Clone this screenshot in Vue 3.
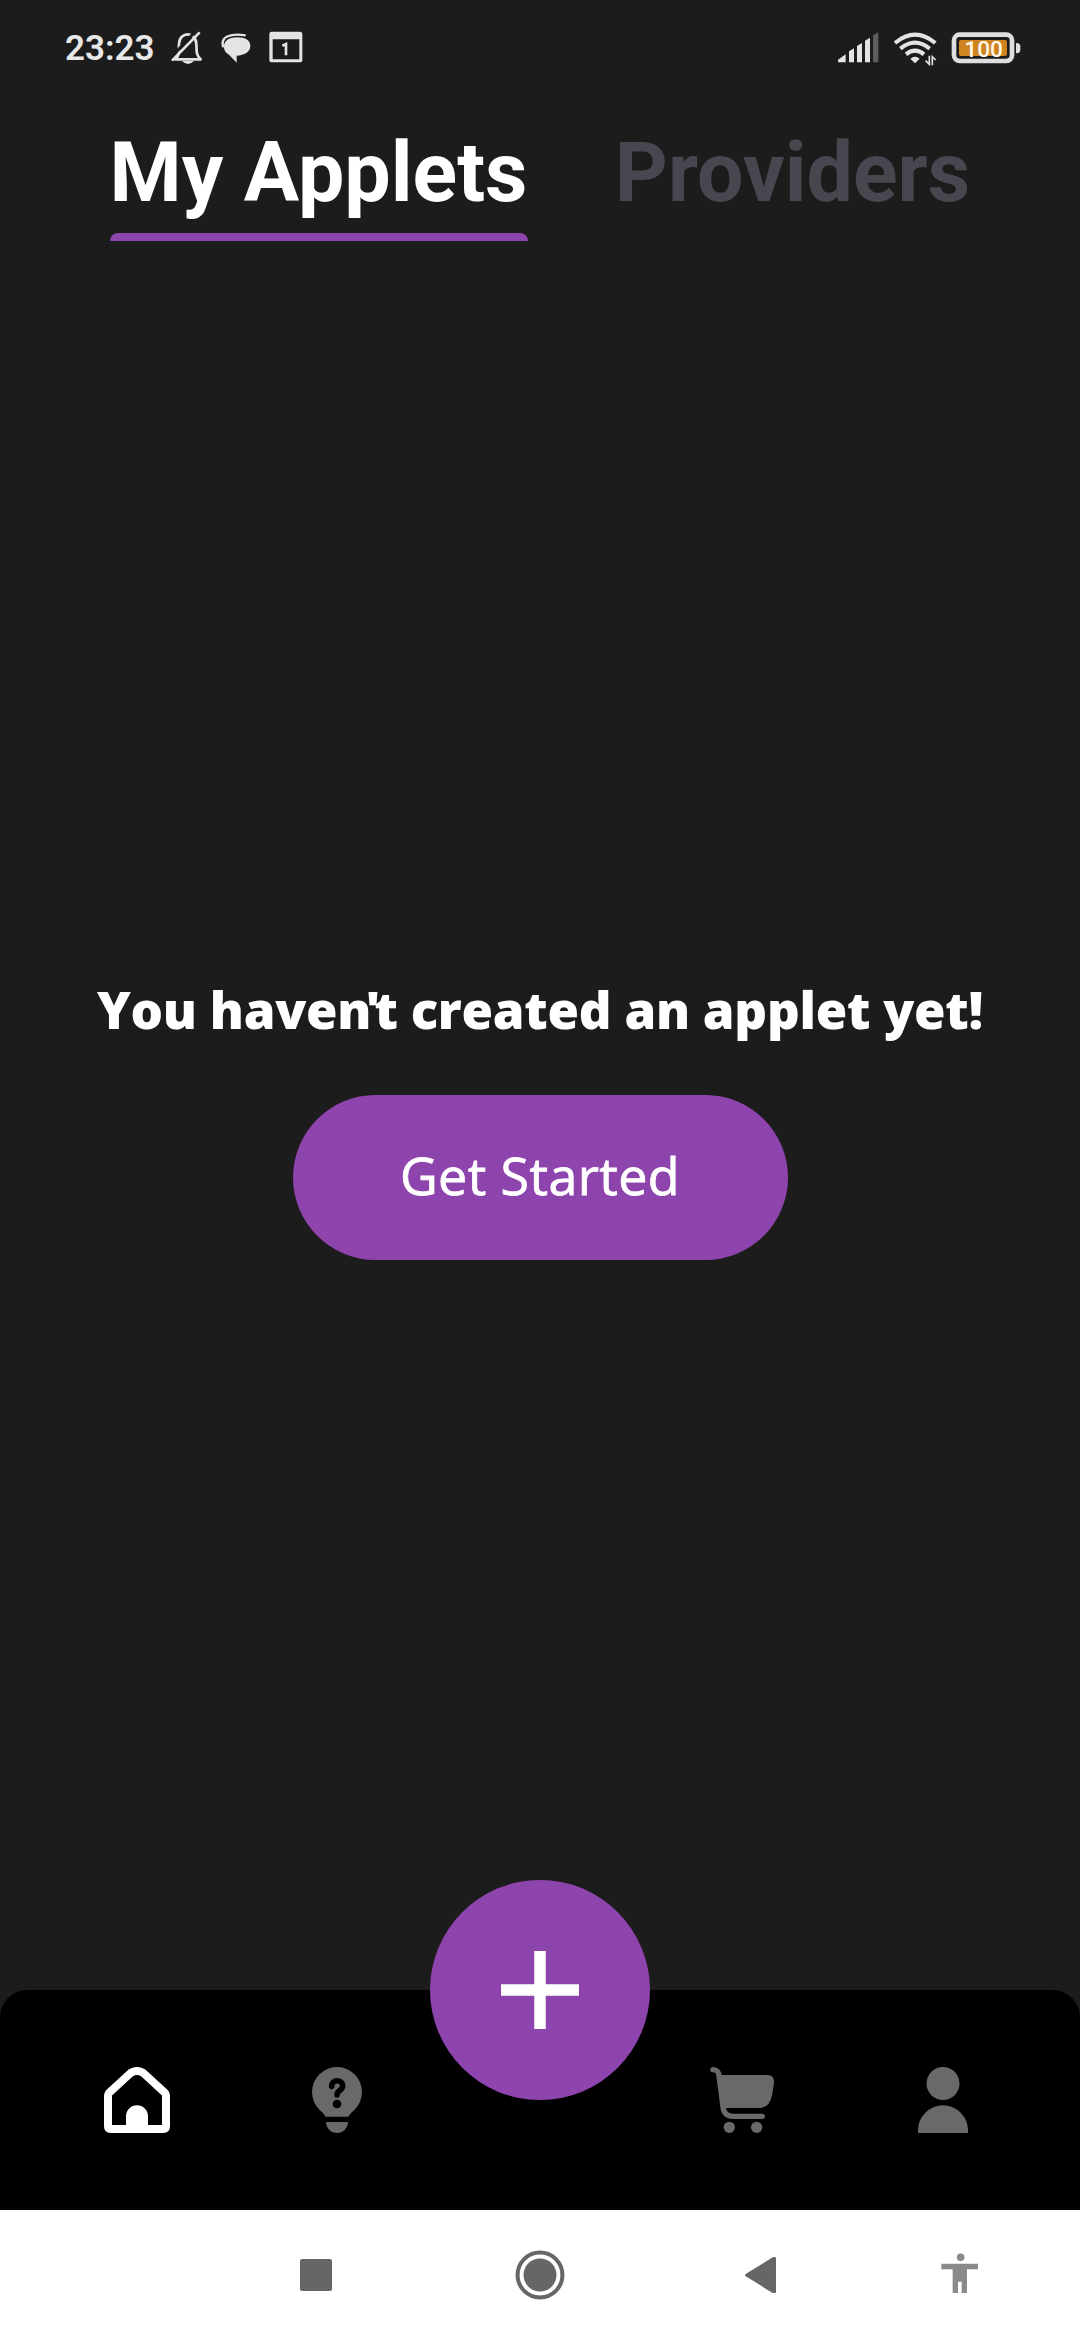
<script setup>
import { ref } from 'vue'

const tabs = ['My Applets', 'Providers']
const active = ref(0)
</script>

<template>
  <div class="screen">
    <header class="status">
      <span class="time">23:23</span>
      <svg class="bell" viewBox="390 60 102 108" width="34" height="36">
        <path d="M405 148 C422 134 415 122 417 101 C419 64 467 64 469 101 C471 122 466 132 482 148 Z" fill="none" stroke="#e4e4e4" stroke-width="8" stroke-linejoin="round" />
        <path d="M426 153 H462 Q444 171 426 153Z" fill="#e4e4e4" />
        <path d="M390 146 L470 60" stroke="#1c1c1c" stroke-width="9" />
        <path d="M396 152 L479 67" stroke="#e4e4e4" stroke-width="8" />
      </svg>
      <svg class="chat" viewBox="543 60 90 108" width="30" height="36">
        <path d="M550 112 C539 78 574 69 617 76" fill="none" stroke="#e4e4e4" stroke-width="7" />
        <path d="M592 82 C617 82 631 92 631 108 C631 126 613 136 590 137 V158 L567 134 C556 128 551 120 552 109 C552 92 568 82 592 82Z" fill="#e4e4e4" />
      </svg>
      <svg class="calendar" viewBox="687 60 102 108" width="34" height="36">
        <path fill-rule="evenodd" d="M695 65 H780 Q787 65 787 72 V149 Q787 157 780 157 H696 Q688 157 688 149 V72 Q688 65 695 65Z M698 88 V148 H778 V88Z" fill="#e4e4e4" />
        <path d="M727 107 L738 102 V136" fill="none" stroke="#e4e4e4" stroke-width="8" />
      </svg>
      <svg class="signal" viewBox="81 60 126 108" width="42" height="36">
        <path d="M84 157 V149 L107 133 V157Z M117 157 V124 L132 115 V157Z M141 157 V108 L156 99 V157Z M165 157 V92 L180 83 V157Z" fill="#e4e4e4" />
        <path d="M189 157 V76 L205 67 V157Z" fill="#5d5d5d" />
      </svg>
      <svg class="wifi" viewBox="249 60 132 108" width="44" height="36">
        <g fill="none" stroke="#e4e4e4" stroke-width="12">
          <path d="M255 99 Q315 49 376 99" />
          <path d="M271 116 Q315 80 359 116" />
          <path d="M288 133 Q315 111 342 133" />
        </g>
        <path d="M301 146 Q315 134 329 146 L315 160Z" fill="#e4e4e4" />
        <path d="M358 137 V163 L347 152 M367 166 V140 L377 150" fill="none" stroke="#e4e4e4" stroke-width="5" />
      </svg>
      <svg class="battery" viewBox="423 60 210 108" width="70" height="36">
        <rect x="432" y="74" width="174" height="79" rx="17" fill="none" stroke="#dedede" stroke-width="14" />
        <rect x="447" y="90" width="144" height="48" rx="6" fill="#cf8420" />
        <path d="M618 99 Q631 99 631 109 V120 Q631 130 618 130Z" fill="#dedede" />
        <text x="463" y="140" textLength="116" lengthAdjust="spacingAndGlyphs">100</text>
      </svg>
    </header>

    <nav class="tabs">
      <button
        v-for="(tab, i) in tabs"
        :key="tab"
        class="tab"
        :class="{ active: active === i }"
        @click="active = i"
      >{{ tab }}</button>
    </nav>

    <main class="empty">
      <h1>You have<span class="tight">n'</span>t created an applet yet!</h1>
      <button class="start">Get Started</button>
    </main>

    <footer class="bar">
      <svg class="home" viewBox="72 81 198 198" width="66" height="66">
        <path d="M84 166 Q84 162 88 158 L153 98 Q171 88 189 98 L254 158 Q258 162 258 166 V259 Q258 267 250 267 H92 Q84 267 84 259Z" fill="none" stroke="#fff" stroke-width="24" />
        <path d="M138 265 V229 a33 33 0 0 1 66 0 V265Z" fill="#fff" />
      </svg>
      <svg class="bulb" viewBox="696 81 150 198" width="50" height="66">
        <path d="M737 230 Q732 220 719 210 A75 75 0 1 1 823 210 Q810 220 805 230Z M738 246 H804 a33 33 0 0 1 -66 0Z" fill="#696969" />
        <path d="M755 139 C755 117 788 117 788 138 C788 152 771 151 771 164" fill="none" stroke="#000" stroke-width="17" stroke-linecap="round" />
        <circle cx="771" cy="192" r="13" />
      </svg>
      <button class="fab" aria-label="Add">
        <svg viewBox="0 0 78 78" width="78" height="78"><path d="M39 0V78M0 39H78" stroke="#fff" stroke-width="11.5" /></svg>
      </button>
      <svg class="cart" viewBox="60 81 193 198" width="64.3" height="66">
        <path d="M86 105 H232 Q254 105 252 129 L247 162 Q240 204 208 204 H94Z" fill="#696969" />
        <path d="M69 89 C81 89 87 97 87 108 L99 200 Q102 229 130 229 H217" fill="none" stroke="#696969" stroke-width="16" stroke-linecap="round" />
        <circle cx="118" cy="262" r="17" fill="#696969" />
        <circle cx="200" cy="262" r="17" fill="#696969" />
      </svg>
      <svg class="person" viewBox="684 81 150 198" width="50" height="66">
        <circle cx="759" cy="130.500" r="49.500" fill="#696969" />
        <path d="M684 279 V271 a75 75 0 0 1 150 0 V279Z" fill="#696969" />
      </svg>
    </footer>

    <div class="system">
      <span class="recents"></span>
      <svg class="circle" viewBox="0 0 50 50" width="50" height="50">
        <circle cx="25" cy="25" r="22.400" fill="none" stroke="#666" stroke-width="4" />
        <circle cx="25" cy="25" r="16.500" fill="#666" />
      </svg>
      <svg class="back" viewBox="135 172 93 109" width="31" height="36.300">
        <path d="M137 223 L218 173 Q228 169 228 177 V276 Q228 284 218 280 L137 230 Q133 227 137 223Z" fill="#666" />
      </svg>
      <svg class="access" viewBox="722 154 112 122" width="37.300" height="40.700">
        <circle cx="781" cy="167" r="11.500" fill="#8a8a8a" />
        <path d="M723 186 H834 V203 H800 V275 H784 V240 H773 V275 H757 V203 H723Z" fill="#8a8a8a" />
      </svg>
    </div>
  </div>
</template>

<style>
body {
  margin: 0;
  background: #1c1c1c;
}
</style>

<style scoped>
.screen {
  display: flex;
  flex-direction: column;
  width: 1080px;
  height: 2340px;
  overflow: hidden;
  background: #1c1c1c;
  font-family: Roboto, sans-serif;
}
svg {
  display: block;
  flex: none;
}
button {
  border: 0;
  padding: 0;
  background: none;
  font: inherit;
}
.status {
  display: flex;
  align-items: center;
  box-sizing: border-box;
  height: 96px;
  padding: 0 59px 0 65px;
}
.time {
  width: 105px;
  font-size: 35px;
  font-weight: 600;
  color: #e8e8e8;
  white-space: nowrap;
}
.chat {
  margin-left: 17px;
}
.calendar {
  margin-left: 18px;
}
.signal {
  margin-left: auto;
}
.wifi {
  margin-left: 14px;
}
.battery {
  margin-left: 14px;
}
.battery text {
  font: 500 68px Roboto, sans-serif;
  fill: #fff8e8;
}
.tabs {
  display: flex;
  justify-content: center;
  gap: 87px;
  height: 145px;
}
.tab {
  display: flex;
  justify-content: center;
  box-sizing: border-box;
  width: 356px;
  height: 145px;
  padding-top: 28px;
  font-size: 82.5px;
  font-weight: 700;
  line-height: 97px;
  color: #48464f;
  white-space: nowrap;
}
.tab.active {
  flex-direction: column;
  align-items: center;
  justify-content: space-between;
  width: 418px;
  color: #fff;
}
.tab.active::after {
  content: "";
  width: 418px;
  height: 8.5px;
  border-radius: 8px 8px 0 0;
  background: #8e44ad;
}
.empty {
  flex: 1;
  display: flex;
  flex-direction: column;
  align-items: center;
  justify-content: flex-start;
  padding-top: 730px;
}
h1 {
  margin: 0;
  height: 76px;
  font: 800 51px/76px "Open Sans", sans-serif;
  letter-spacing: -0.25px;
  color: #fff;
  white-space: nowrap;
}
.tight {
  letter-spacing: -6px;
}
.start {
  box-sizing: border-box;
  margin-top: 48px;
  width: 495px;
  height: 165px;
  padding-bottom: 6px;
  border-radius: 83px;
  background: #8e44ad;
  font: 500 52px/159px "Open Sans", sans-serif;
  letter-spacing: 0.4px;
  -webkit-text-stroke: 0.8px #fff;
  color: #fff;
}
.bar {
  display: flex;
  align-items: center;
  box-sizing: border-box;
  height: 220px;
  padding: 0 112px 0 104px;
  border-radius: 27.5px 27.5px 0 0;
  background: #000;
}
.bulb {
  margin-left: 142px;
}
.fab {
  display: flex;
  align-items: center;
  justify-content: center;
  flex: none;
  width: 220px;
  height: 220px;
  margin: -220px 0 0 68px;
  border-radius: 50%;
  background: #8e44ad;
}
.cart {
  margin-left: 60px;
}
.person {
  margin-left: auto;
}
.system {
  display: flex;
  align-items: center;
  height: 130px;
  padding-left: 300px;
  background: #fff;
}
.recents {
  width: 32px;
  height: 32px;
  border-radius: 2px;
  background: #666;
}
.circle {
  margin-left: 182.7px;
}
.back {
  margin-left: 180.3px;
}
.access {
  margin: -4px 0 0 164.7px;
}
</style>
